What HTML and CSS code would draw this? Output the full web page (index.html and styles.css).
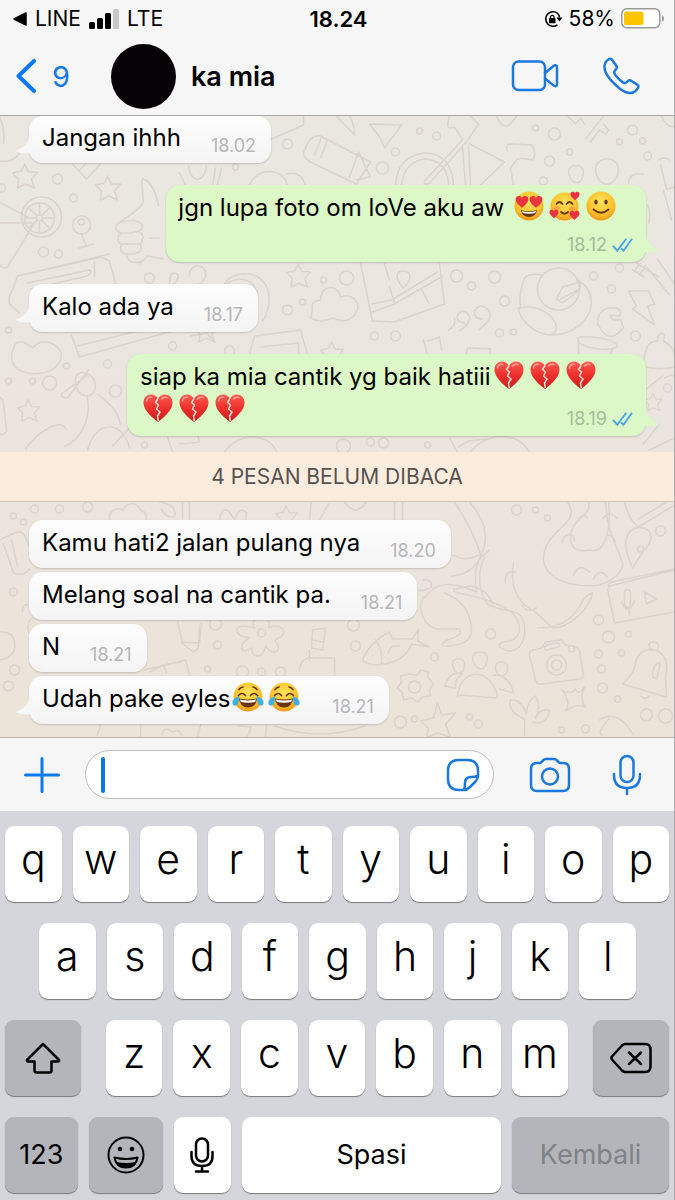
FILE: index.html
```html
<!DOCTYPE html>
<html lang="id">
<head>
<meta charset="utf-8">
<meta name="viewport" content="width=device-width, initial-scale=1">
<title>ka mia</title>
<link rel="stylesheet" href="styles.css">
</head>
<body>
<svg class="defs" aria-hidden="true">
  <defs>
    <radialGradient id="face" cx=".5" cy=".35" r=".7"><stop offset="0" stop-color="#ffe35c"/><stop offset=".6" stop-color="#fdc42e"/><stop offset="1" stop-color="#ee8f14"/></radialGradient>
    <linearGradient id="red" x1="0" y1="0" x2="0" y2="1"><stop offset="0" stop-color="#ff5a50"/><stop offset=".5" stop-color="#ee2f2c"/><stop offset="1" stop-color="#c41f1f"/></linearGradient>
    <symbol id="heart" viewBox="0 0 12 12"><path d="M6 11C2.500 8 .5 6 .5 3.600.5 .8 4.500-.2 6 2.600 7.500-.2 11.500.8 11.500 3.600 11.500 6 9.500 8 6 11z" fill="#ea3440"/></symbol>
    <symbol id="broken" viewBox="0 0 36 32">
      <path d="M18 30C9 23 3.500 17 3.500 10.500 3.500 5.500 7 2.500 11 2.500c3 0 5.500 1.500 7 4.500 1.500-3 4-4.500 7-4.500 4 0 7.500 3 7.500 8C32.500 17 27 23 18 30z" fill="url(#red)"/>
      <path d="M6.500 9c.5-2.500 2.500-4 5-3.800M21.500 7c1.500-1.600 3.500-2.200 5.500-1.500" fill="none" stroke="#ff9d92" stroke-width="1.600" stroke-linecap="round"/>
      <path d="M18 6.500l-2.500 4 3 2.500-2 4 3.500 3-2.500 4 .8 5" fill="none" stroke="#fbe3d2" stroke-width="1.500" stroke-linejoin="round"/>
    </symbol>
    <symbol id="love" viewBox="0 0 36 32">
      <circle cx="18" cy="16" r="14.500" fill="url(#face)"/>
      <use href="#heart" x="4" y="5" width="14" height="14"/><use href="#heart" x="18" y="5" width="14" height="14"/>
      <path d="M10 20q8 2.500 16 0-1 7-8 7t-8-7z" fill="#6b3410"/><path d="M11 21q7 2 14 0l-.6 2q-6.400 1.500-12.800 0z" fill="#fff"/>
    </symbol>
    <symbol id="adore" viewBox="0 0 36 32">
      <circle cx="17.500" cy="16.500" r="14" fill="url(#face)"/>
      <path d="M9.500 14q3-4 6 0M19.500 14q3-4 6 0M14 22q3.500 3.500 7 0" fill="none" stroke="#6b3a10" stroke-width="1.800" stroke-linecap="round"/>
      <ellipse cx="9.500" cy="18.500" rx="3" ry="2" fill="#fb8d47" opacity=".7"/><ellipse cx="25" cy="18.500" rx="3" ry="2" fill="#fb8d47" opacity=".7"/>
      <use href="#heart" x="23" y="1" width="10" height="10"/><use href="#heart" x="2" y="19" width="10" height="10"/><use href="#heart" x="22" y="20" width="11" height="11"/>
    </symbol>
    <symbol id="smile" viewBox="0 0 36 32">
      <circle cx="18" cy="16" r="14.500" fill="url(#face)"/>
      <ellipse cx="13" cy="12" rx="1.700" ry="2.500" fill="#65370e"/><ellipse cx="23" cy="12" rx="1.700" ry="2.500" fill="#65370e"/>
      <path d="M10.500 19.500q7.500 6.500 15 0" fill="none" stroke="#65370e" stroke-width="1.900" stroke-linecap="round"/>
    </symbol>
    <symbol id="joy" viewBox="0 0 36 32">
      <circle cx="18" cy="16" r="14.500" fill="url(#face)"/>
      <path d="M8.500 14.500q3.500-4 7 0M20.500 14.500q3.500-4 7 0M9 8.500q1.500-2 4-2.500M27 8.500q-1.500-2-4-2.500" fill="none" stroke="#6b3a10" stroke-width="1.700" stroke-linecap="round"/>
      <path d="M9 17.500q9 2 18 0-1 9-9 9t-9-9z" fill="#6b3410"/><path d="M10 18.500q8 1.800 16 0l-.8 2.500q-7.200 1.500-14.400 0z" fill="#fff"/>
      <path d="M9.500 15.500C5 16 2 19 2.500 22.500c.6 3 5 2.800 5.800-.4zM26.500 15.500c4.500.5 7.500 3.500 7 7-.6 3-5 2.800-5.800-.4z" fill="#42aee8"/>
    </symbol>
    <symbol id="tail" viewBox="0 0 18 20"><path d="M15 0C15 8 10 13 1 16c5 2.500 11 3 17 2V0z"/></symbol>
    <symbol id="ticks" viewBox="0 0 22 16"><path d="M1 9l4.500 5L15 1.500M9.500 11.500l2.500 2.500L21 1.500" fill="none" stroke="#4ba6e6" stroke-width="2"/></symbol>
    <symbol id="star" viewBox="0 0 28 28"><path d="M13 2l4 8 9 0-6 7 3 9-9-4-8 4 1-9-6-6 9-2z" /></symbol>
  </defs>
</svg>

<header class="top">
  <div class="status">
    <div class="status-side">
      <svg class="back-app" viewBox="0 0 14 14"><path d="M13 1v12L1 7z" stroke="#000" stroke-width="1.500" stroke-linejoin="round"/></svg>
      <span>LINE</span>
      <svg class="signal" viewBox="0 0 30 20"><rect y="13" width="6" height="7" rx="1.500"/><rect x="8" y="9" width="6" height="11" rx="1.500"/><rect x="16" y="4" width="6" height="16" rx="1.500"/><rect x="24" width="6" height="20" rx="1.500" fill="#c8c8c8"/></svg>
      <span>LTE</span>
    </div>
    <time class="clock">18.24</time>
    <div class="status-side status-end">
      <svg class="lock" viewBox="0 0 20 18"><path d="M14.500 3.200A7.300 7.300 0 1 0 14.500 14.800M14.500 3.200Q16.300 5 16.500 7.500" fill="none" stroke="#000" stroke-width="1.600"/><path d="M13.500 7.500h6l-3 4z"/><rect x="6" y="8" width="6.500" height="5.300" rx=".8"/><path d="M7.500 8V6.700a1.800 1.800 0 0 1 3.500 0V8" fill="none" stroke="#000" stroke-width="1.200"/></svg>
      <span>58%</span>
      <svg class="battery" viewBox="0 0 43 21"><rect x=".8" y=".8" width="38" height="19" rx="5" fill="#fff" stroke="#999" stroke-width="1.500"/><rect x="3" y="3.500" width="19.500" height="13.500" rx="2.500" fill="#fdc500"/><path d="M41 7.500q2 .5 2 3t-2 3z" fill="#999"/></svg>
    </div>
  </div>
  <nav class="nav">
    <a class="back" href="#chats" aria-label="Kembali ke daftar chat"><svg class="chevron" viewBox="0 0 20 34"><path d="M18 2L2.500 17 18 32"/></svg><span>9</span></a>
    <span class="avatar"></span>
    <h1 class="name">ka mia</h1>
    <button class="icon-btn" aria-label="Panggilan video"><svg class="video" viewBox="0 0 48 32"><rect x="2" y="1.500" width="32" height="28.500" rx="5.500"/><path d="M34 13l8.500-7c1.700-1.400 3.500-.8 3.500 1.200v17c0 2-1.800 2.600-3.500 1.200L34 18.500"/></svg></button>
    <button class="icon-btn" aria-label="Panggilan suara"><svg class="phone" viewBox="0 0 38 38"><path d="M3.500 5.500C5 3 8 1 9.500 2.200L14.500 9c1.200 1.800-.3 3.300-1.600 4.600-1.400 1.400-.8 2.800.8 5 2 2.600 4.500 5 7 6.600 1.800 1.200 3 1.200 4.200-.2 1-1.200 2.500-2.300 4.200-1.300l6.500 4.200c2 1.400 0 4.300-2.300 6.300-4.500 3.500-11.500 1.800-19.500-6C3.500 18.500.5 11 3.500 5.500z"/></svg></button>
  </nav>
</header>

<main class="chat">
  <svg class="doodles" viewBox="0 116 675 621" preserveAspectRatio="xMidYMin slice" aria-hidden="true">
    <g>
      <path d="M0 117q6 12 4 26M0 161q14 2 20-8M73 164l14 15 14-15M80 170l6-6M170 116q-2 12 20 14M270 140l34-15V116M305 150q6-16 16-14l50 26-14 22-44-21q-12-6-8-13zM315 155l7-18M321 158l7-18M350 177l9-25M359 152l12 25M357 180l13-3"/>
      <path d="M396 185q2-30 30-32 26 1 28 32M402 185q3-24 24-26 22 2 23 26M425 181l38-41-8-13q-12 5-3-16 7-7 14 0l13 13-12 18-37 41q-6 3-5-2zM463 147l3 38M469 147l2 38M470 144l35 18-24 23M508 151q-3-7 4-7l20 1q6 8 1 15-14-3-16 0l-6 8 3 17M370 124l32 1-17 23-4-10zM337 116l18 19q0-11-5-19M568 116l8 8 5-6 4 6M586 139l18-23M591 142l9-12 6 4 3-4-5-6M497 116q8 20 20 0M662 116q6 13 13 10"/>
      <path d="M569 172c0-9 15-9 15 0 0 7-4 11-7 11s-8-5-8-11zM596 170c0-15 23-15 23 0 0 8-6 14-12 14s-11-8-11-14zM629 183q1-11 15-9M659 160q6-4 11 0M661 165l6 24 8-2M664 190l8 30M648 205q4 10 1 18"/>
      <circle cx="42" cy="217" r="20"/><circle cx="40" cy="218" r="15"/><circle cx="40" cy="218" r="3"/><path d="M25 218h12M43 218h12M40 203v12M40 221v12M29 208l9 8M51 207l-9 9M29 228l9-8M51 229l-9-9M0 202l28 15M0 223h35L8 267q-5 2-8-2"/>
      <circle cx="82" cy="225" r="9"/><circle cx="82" cy="222" r="3"/><path d="M82 234l5 13M80 248l14-4M119 223c10-7 19-12 24-19 3-6-5-30 3-24 8 5 12 19 13 26M119 223c-6 6 0 10 4 10-7 2-5 11 0 11-4 4-1 10 4 10 0 9 12 11 18 5M119 223q20-6 24 3 0 8-22 7M123 244h18q5-8 0-11M127 254q18 1 14-10M150 238h10M140 264l8-8 16 3M250 185c7-18 34-18 38 0M287 174q14-4 19 11M180 173l6 12M189 166c1 15 15 20 18 0M216 168l-3 17M222 168l-4 17"/>
      <path d="M20 313l-10-9q-2-6 3-14l5-14 84-19 8 4 6 23M18 276l92-22M28 283l62-13M31 289l57-13q5-4 2-6M95 262v14M170 284q0-14 8-10 2 5-4 10M190 276c-1-14 18-13 16 0q-2 7-7 8M225 284c8-15 40-15 44 9 2 12-2 23-6 28M227 284c10-9 31-5 31 12M311 318c5-10-4-16 10-18 0-16 18-16 20-3 14-4 22 8 14 18q-9 10-22 3-12 6-22 0z"/>
      <path d="M361 263l12 58 22 1 50-18-5-40M373 312l22-8 48-28M372 304l20-4 46-28M385 264l5 16M390 287l5 16M422 289l7 14M404 288c-9-10-8-17 0-17s9 9 0 17zM455 318q2 8-6 12M460 331q13-9 9-16-5-8-11 0-2 7 7 8M479 330q16-12 10-20-8-8-14 1-1 8 8 8"/>
      <circle cx="559" cy="289" r="21"/><path d="M543 275q-17-3-19 6-5 15-3 27M519 308q19-4 32 8c8 9 8 17-1 19-18-2-31-18-31-27zM552 335c22 0 40-16 40-33q-1-15-14-22M557 299l6-12 18-5-1 8-17 13zM561 299l19-10M649 291l-20 0 8 15-4 3 22 16-7-19 7-2zM598 324q0-18 19-16 6 3 3 8l-9-1q0 7 10 4l3 9q-14 17-24-1zM637 263l22 14M633 270l12 7M658 259l17 25M648 268l22 27M641 263l-7 9M646 266l-6 9"/>
      <path d="M15 346c3-8 12-3 18 2 10-13 27-3 29 6 0 16-19 22-34 19-16-3-19-15-13-27zM72 335l8 22 118-33M78 346l80-20M250 354l5-18 46-6 7 24M261 347l38-4v10M191 336l16-3 6 6M424 340l4 15M428 341l12-4 2 13M466 357l2-9 23 1-1 5M578 339c0-5 38-1 40 7-1 5-36 5-40-7zM579 342v14M613 349l-3 7M643 368c3-23 6-27 15-27l1-6q4-4 6 0l-1 6q11 6 11 16M643 366q17 5 31 1M647 389l16-13M665 378q6-4 9-2M650 450l25-12M644 444l16-20"/>
      <path d="M88 375l-26 19q0 4 6 4l21-28M76 381c-1-14 20-10 20 6-2 14-20 11-20-6zM88 398c3 18-4 41-23 48M66 429c-2-10-24-2-40 20M98 394c17 13 21 20 23 31M88 450c7-28 34-33 42-2M113 446l17-18M0 398q4 0 4 7l3 25q0 4-7 5M168 437l5 15M180 444l20-2-2-8M225 452c11-18 43-22 52 0M472 451c14-18 46-20 57 0M450 438l8 14M459 447l10-6 18-2"/>
      <path d="M110 520c-1-11 8-12 13-10 5-8 14-9 18 0 6 2 7 7 5 12M160 502q19 3 15 15-9 1-13-8M183 502v17M190 502v17M220 520q2-15 10-8l5 8q5-15 12-7l-1 7M312 502l-2 17M320 520l9-16M345 502q12 17 23-2M395 502v18M403 502v18M455 502q17 25 26 52-15 9-27 1M470 502q27 30 8 60-9 13-26 14"/>
      <path d="M568 502c16 23-25 27-24 58 2 20 29 28 56 25 19-6 26-18 22-25-7-19-15-31-16-58M589 502c4 13-16 16-18 33-1 11 5 18 19 15 15 5 22-18 19-48M579 520q5-8 9-2M563 543c1-11 12-11 12-2M604 518q6-8 13 0M608 535q6 0 8 7M574 575q6-13 16-3M594 579q6-12 14-2"/>
      <path d="M625 502q4 18 14 25l36-22M633 568c-10-22-8-34 1-39 15-6 25 8 10 22zM639 519l28-17"/><circle cx="641" cy="549" r="3"/>
      <path d="M0 540l15-7q8-3 11 4l4 10M4 544l10 29q10 4 16-4M12 540l6 27M23 611q0-7 5-6M0 632q18-1 15 18-6 10-15 10M29 632q-2-10 4-14M178 622l5 20 17 1 2-20M182 643l12 9 5-4 1-23M145 670l41-10 4 15M150 672l14-7 3 8M168 664l14-2"/>
      <path d="M255 628c-8-12 20-15 14 0 12-6 18 4 14 7-3 4-9 4-7 7 8 8-2 16-10 4-3 14-14 12-14 2-12 8-14-4-2-10-18-2-17-17 5-10zM313 630l13-2-3 22-11-2zM312 640l12 2M310 650v10M300 671q0-10 8-13h27v17"/><circle cx="262" cy="633" r="4"/>
      <path d="M425 598c10-14 21-16 39-11l13 5q-4-24 5-35l8-7M485 557c-9 18-4 39 3 47 19 12 39-1 37 30-1 12-11 23-25 13q-2-5 10-6c14-4 12-19 2-29-21-14-38-15-56-20q-4-2 0-3l15-3q18 4 22 18M424 597c-7 13 1 32 17 32h18c6 5-3 8-11 11-8 4-5 7 2 6q23-2 22-17-2-27-27-36M514 563c-4 25 4 40 21 48l18 17M538 628c30 0 38-14 47-30q4-4 8-5c-3 15-22 35-40 35M506 583q-2-13 10-11M523 605q4 9 14 3M424 580q8-2 8 7-9 5-13 3"/>
      <path d="M610 586l65-16M610 588q-3-4 2-6l63-13M608 589l7 34 60-11M645 592l12 7-10 5zM625 592c0-3 6-3 6 0v13q-3 5-6 0zM622 602q7 15 13-1M629 608l1 7"/>
      <path d="M363 660c5-12 15-22 27-28l3 7h20q8-13 6-8l-1 10 12 6-18-3c-4 13-18 20-36 21q-10-1-13-5zM376 640q8 10 6 24M389 653q1-9 11-7M373 656v-1M410 674l8 1 3-5 8 2-1 5 6 7-4 6 1 6-8 1-5 5-6-4-8 2-1-7-5-5 4-6-1-6z"/><circle cx="415" cy="687" r="6"/>
      <path d="M473 658c0-8 15-8 15 0 0 7-4 11-7 11s-8-5-8-11zM453 664c0-7 12-7 12 0s-3 9-6 9-6-4-6-9zM496 667c0-7 12-7 12 0s-3 9-6 9-6-4-6-9zM458 696c3-28 32-30 40 0l-1 2-36-3zM445 686q6-16 18-12-8 4-7 14zM494 675q16 0 20 18l-14-4"/>
      <path d="M530 655q-1-4 4-5l8-2 4-6 16-2 4 5 9 1q4 1 5 5l4 24q1 3-4 4l-38 5q-5 1-6-4zM547 650l12-3q2-4-1-4l-11 2q-4 4 0 5z"/><circle cx="557" cy="665" r="10"/><circle cx="557" cy="665" r="5"/><circle cx="572" cy="649" r="3"/>
      <path d="M623 684q13-12 13-22 4-14 20-12 15 6 10 27l1 20-44-13zM652 651q-6-9 2-9 8 1 3 9M641 696q5 4 9 0M656 665q6-6 4 2l-3 12q-6-1-3-10zM562 690q10 5 14-1 3 7 9-2-4 10-2 12 0 5 3 8-9-3-12 0-3 1-8 4 4-8 1-12 0-5-5-9zM525 735v-16q-17-7-14-19 11-1 16 14 0-12 9-18 6 11 0 22 4-10 14-8-2 16-17 12M600 720q18-12 34 15M610 718q-13 15-8 17M438 703l4 12 14-2-10 11 5 13-13-4-11 5 2-10-8-7 13-3zM98 735q3-10 5-18M141 737v-12M163 735q1-10 10-3 7-4 9 3M198 737l4-15M240 726l12 1-4 9M266 737l1-12M275 726q45 16 90 0"/>
    </g>
    <g>
      <use href="#star" x="12" y="162" width="28" height="28"/><use href="#star" x="95" y="174" width="28" height="28"/><use href="#star" x="286" y="262" width="27" height="27"/><use href="#star" x="17" y="398" width="25" height="25"/><use href="#star" x="194" y="318" width="26" height="26"/><use href="#star" x="320" y="340" width="26" height="26"/><use href="#star" x="275" y="504" width="25" height="25"/><use href="#star" x="644" y="392" width="20" height="20"/>
      <circle cx="58" cy="179" r="5"/><circle cx="2" cy="188" r="4"/><circle cx="74" cy="198" r="4"/><circle cx="44" cy="252" r="5"/><circle cx="59" cy="254" r="4"/><circle cx="288" cy="144" r="5"/><circle cx="236" cy="167" r="3"/><circle cx="150" cy="278" r="5"/><circle cx="303" cy="302" r="3"/><circle cx="288" cy="310" r="5"/><circle cx="324" cy="280" r="3"/><circle cx="9" cy="330" r="3"/><circle cx="9" cy="381" r="3"/><circle cx="33" cy="381" r="3"/><circle cx="50" cy="383" r="7"/><circle cx="67" cy="366" r="3"/><circle cx="108" cy="364" r="4"/><circle cx="116" cy="391" r="6"/><circle cx="173" cy="346" r="4"/><circle cx="230" cy="351" r="5"/><circle cx="145" cy="445" r="3"/><circle cx="35" cy="509" r="4"/><circle cx="60" cy="509" r="4"/><circle cx="14" cy="516" r="3"/><circle cx="88" cy="507" r="5"/><circle cx="24" cy="522" r="3"/><circle cx="14" cy="592" r="4"/><circle cx="15" cy="670" r="5"/><circle cx="9" cy="686" r="5"/>
      <circle cx="420" cy="131" r="3"/><circle cx="437" cy="136" r="4"/><circle cx="396" cy="152" r="4"/><circle cx="383" cy="168" r="6"/><circle cx="536" cy="128" r="3"/><circle cx="555" cy="134" r="6"/><circle cx="570" cy="152" r="3"/><circle cx="550" cy="161" r="5"/><circle cx="544" cy="181" r="4"/><circle cx="633" cy="130" r="5"/><circle cx="620" cy="142" r="3"/><circle cx="643" cy="141" r="3"/><circle cx="648" cy="156" r="4"/><circle cx="347" cy="278" r="7"/><circle cx="457" cy="276" r="6"/><circle cx="472" cy="286" r="4"/><circle cx="495" cy="277" r="6"/><circle cx="505" cy="301" r="5"/><circle cx="594" cy="276" r="4"/><circle cx="620" cy="268" r="4"/><circle cx="612" cy="289" r="4"/><circle cx="375" cy="336" r="4"/><circle cx="396" cy="336" r="5"/><circle cx="500" cy="333" r="4"/><circle cx="514" cy="332" r="3"/><circle cx="636" cy="336" r="5"/><circle cx="668" cy="388" r="4"/><circle cx="344" cy="446" r="7"/><circle cx="371" cy="442" r="4"/><circle cx="384" cy="443" r="5"/><circle cx="428" cy="445" r="3"/><circle cx="517" cy="510" r="5"/><circle cx="536" cy="510" r="3"/><circle cx="548" cy="518" r="3"/><circle cx="661" cy="531" r="5"/>
      <circle cx="216" cy="624" r="6"/><circle cx="218" cy="645" r="4"/><circle cx="208" cy="669" r="3"/><circle cx="243" cy="672" r="6"/><circle cx="262" cy="672" r="4"/><circle cx="281" cy="672" r="5"/><circle cx="354" cy="625" r="6"/><circle cx="356" cy="646" r="5"/><circle cx="435" cy="657" r="4"/><circle cx="491" cy="634" r="5"/><circle cx="599" cy="620" r="5"/><circle cx="609" cy="637" r="6"/><circle cx="629" cy="634" r="3"/><circle cx="599" cy="654" r="4"/><circle cx="622" cy="653" r="3"/><circle cx="602" cy="669" r="4"/><circle cx="603" cy="688" r="5"/><circle cx="618" cy="699" r="3"/><circle cx="647" cy="715" r="6"/><circle cx="666" cy="716" r="7"/><circle cx="401" cy="722" r="6"/><circle cx="415" cy="719" r="3"/><circle cx="470" cy="717" r="3"/><circle cx="479" cy="724" r="4"/><circle cx="562" cy="730" r="3"/><circle cx="586" cy="729" r="4"/>
    </g>
  </svg>

  <div class="msg in"><p>Jangan ihhh</p><time>18.02</time><svg class="tail"><use href="#tail"/></svg></div>
  <div class="msg out">
    <p>jgn lupa foto om loVe aku aw <svg class="emoji" role="img" aria-label="😍"><use href="#love"/></svg><svg class="emoji" role="img" aria-label="🥰"><use href="#adore"/></svg><svg class="emoji" role="img" aria-label="🙂"><use href="#smile"/></svg></p>
    <div class="meta"><time>18.12</time><svg class="ticks"><use href="#ticks"/></svg></div><svg class="tail"><use href="#tail"/></svg>
  </div>
  <div class="msg in"><p>Kalo ada ya</p><time>18.17</time><svg class="tail"><use href="#tail"/></svg></div>
  <div class="msg out wrapped">
    <p>siap ka mia cantik yg baik hatiii<svg class="emoji" role="img" aria-label="💔"><use href="#broken"/></svg><svg class="emoji" role="img" aria-label="💔"><use href="#broken"/></svg><svg class="emoji" role="img" aria-label="💔"><use href="#broken"/></svg><svg class="emoji" role="img" aria-label="💔"><use href="#broken"/></svg><svg class="emoji" role="img" aria-label="💔"><use href="#broken"/></svg><svg class="emoji" role="img" aria-label="💔"><use href="#broken"/></svg></p>
    <div class="meta"><time>18.19</time><svg class="ticks"><use href="#ticks"/></svg></div><svg class="tail"><use href="#tail"/></svg>
  </div>
  <h2 class="unread">4 PESAN BELUM DIBACA</h2>
  <div class="group">
    <div class="msg in"><p>Kamu hati2 jalan pulang nya</p><time>18.20</time></div>
    <div class="msg in"><p>Melang soal na cantik pa.</p><time>18.21</time></div>
    <div class="msg in"><p>N</p><time>18.21</time></div>
    <div class="msg in"><p>Udah pake eyles<svg class="emoji" role="img" aria-label="😂"><use href="#joy"/></svg><svg class="emoji" role="img" aria-label="😂"><use href="#joy"/></svg></p><time>18.21</time><svg class="tail"><use href="#tail"/></svg></div>
  </div>
</main>

<form class="composer">
  <button type="button" class="icon-btn" aria-label="Lampirkan"><svg class="plus" viewBox="0 0 36 36"><path d="M18 1.500v33M1.500 18h33"/></svg></button>
  <div class="field">
    <span class="caret"></span>
    <input type="text" aria-label="Pesan">
    <button type="button" class="icon-btn" aria-label="Stiker"><svg class="sticker" viewBox="0 0 34 34"><path d="M18 32H13Q2 32 2 21V13Q2 2 13 2h8Q32 2 32 13v5q0 3-3 6l-5 5q-3 3-6 3zM18 32q1-3 1-7 0-6 6-6 4 0 7-1"/></svg></button>
  </div>
  <button type="button" class="icon-btn" aria-label="Kamera"><svg class="camera" viewBox="0 0 42 36"><path d="M8 6h2.500q1.500 0 2.500-1.500l1-1Q15 2 17 2h8q2 0 3 1.500l1 1Q30 6 31.500 6H34q6 0 6 6v16q0 6-6 6H8q-6 0-6-6V12q0-6 6-6z"/><circle cx="21" cy="19.500" r="8"/></svg></button>
  <button type="button" class="icon-btn" aria-label="Pesan suara"><svg class="mic" viewBox="0 0 30 42"><rect x="8.500" y="2" width="13" height="26" rx="6.500"/><path d="M2 20v1q0 13 13 13t13-13v-1M15 34v6"/></svg></button>
</form>

<section class="keyboard" aria-label="Keyboard">
  <div class="keys row-top"><button>q</button><button>w</button><button>e</button><button>r</button><button>t</button><button>y</button><button>u</button><button>i</button><button>o</button><button>p</button></div>
  <div class="keys row-home"><button>a</button><button>s</button><button>d</button><button>f</button><button>g</button><button>h</button><button>j</button><button>k</button><button>l</button></div>
  <div class="keys row-low">
    <button class="dark" aria-label="Shift"><svg class="shift" viewBox="0 0 36 32"><path d="M18 2L2 18q-.5 1.500 1 1.500h6.500v9q0 2 2 2h13q2 0 2-2v-9H33q1.500 0 1-1.500z"/></svg></button>
    <div class="keys letters"><button>z</button><button>x</button><button>c</button><button>v</button><button>b</button><button>n</button><button>m</button></div>
    <button class="dark" aria-label="Hapus"><svg class="erase" viewBox="0 0 42 32"><path d="M15 2h20q5.500 0 5.500 5.500v17q0 5.500-5.500 5.500H15q-1.500 0-3-1.500L2 17.500q-1-1.500 0-3L12 3.500Q13.500 2 15 2zM19 10.500l12 11.500M31 10.500L19 22"/></svg></button>
  </div>
  <div class="keys row-space">
    <button class="dark label">123</button>
    <button class="dark" aria-label="Emoji"><svg class="grin" viewBox="0 0 38 38"><circle cx="19" cy="19" r="17.500"/><path d="M7.500 21.500q11.500 3 23 0-1.500 10-11.500 10t-11.500-10z"/><path d="M9.500 26q9.500 2 19 0-3 5.500-9.500 5.500t-9.500-5.500z" class="solid"/><circle cx="13" cy="13" r="2.300" class="solid"/><circle cx="25" cy="13" r="2.300" class="solid"/></svg></button>
    <button aria-label="Dikte"><svg class="dictate" viewBox="0 0 24 36"><rect x="6" y="1.500" width="12" height="23" rx="6"/><path d="M1.500 15v4q0 10 10.500 10t10.500-10v-4M12 29v5M6 34.500h12"/></svg></button>
    <button class="label">Spasi</button>
    <button class="dark label" disabled>Kembali</button>
  </div>
</section>
</body>
</html>
```
FILE: styles.css
```css
* { box-sizing: border-box; }

body {
  margin: 0;
  min-height: 100vh;
  display: flex;
  flex-direction: column;
  border-right: 1px solid #a9a9a9;
  background: #d5d6db;
  color: #000;
  font-family: Inter, Roboto, "Liberation Sans", sans-serif;
}

svg { display: block; flex: none; }
p, h1, h2 { margin: 0; font-weight: 400; }
button { border: 0; padding: 0; background: none; color: inherit; font: inherit; }
.defs { position: absolute; width: 0; height: 0; }

.top { background: #f6f6f6; border-bottom: 1px solid #a8a8a8; }

.status {
  display: grid;
  grid-template-columns: 1fr auto 1fr;
  align-items: center;
  height: 37px;
  padding: 0 10px 0 13px;
  font-size: 21px;
}
.status-side { display: flex; align-items: center; gap: 8px; }
.status-end { justify-content: flex-end; gap: 6px; }
.clock { font-size: 22px; font-weight: 600; }
.back-app { width: 14px; height: 14px; }
.signal { width: 30px; height: 20px; }
.lock { width: 20px; height: 18px; }
.battery { width: 43px; height: 21px; }

.nav { display: flex; align-items: center; height: 78px; padding: 0 34px 0 16px; }
.back { display: flex; align-items: center; gap: 16px; width: 95px; color: #1579ea; font-size: 29px; text-decoration: none; }
.avatar { width: 65px; height: 65px; border-radius: 50%; background: #070205; }
.name { flex: 1; margin-left: 15px; font-size: 27px; font-weight: 600; }
.icon-btn { display: flex; flex: none; }
.icon-btn svg, .chevron { fill: none; stroke: #1b78de; stroke-width: 2.5; stroke-linecap: round; stroke-linejoin: round; }
.chevron { width: 20px; height: 34px; stroke: #0c79f2; stroke-width: 4; }
.video { width: 48px; height: 32px; }
.phone { width: 38px; height: 38px; margin-left: 43px; }

.chat {
  position: relative;
  display: flex;
  flex: 1;
  flex-direction: column;
  align-items: flex-start;
  gap: 22px;
  padding-bottom: 13px;
  background: linear-gradient(#eae7e1, #ece5df 50%, #ece4d9);
  overflow: hidden;
}
.doodles { position: absolute; inset: 0; width: 100%; height: 100%; fill: none; stroke: #dad4cc; stroke-width: 1.5; stroke-linejoin: round; stroke-linecap: round; }

.msg { position: relative; border-radius: 14px; box-shadow: 0 1px 2px #0000002e; }
.msg p { font-size: 24px; line-height: 33px; }
.msg time { color: #b5b5b8; font-size: 18px; line-height: 20px; }
.in { display: flex; align-items: flex-end; gap: 30px; height: 48px; margin-left: 29px; padding: 0 15px 7px 13px; background: linear-gradient(#fdfdfd, #f4f4f4); }
.in p { margin-bottom: 2px; }
.out { align-self: flex-end; max-width: 77%; margin-right: 28px; padding: 6px 27px 38px 12px; background: #dbf8c6; }
.chat > .in:first-of-type { height: 47px; }
.out.wrapped { padding: 6px 14px 10px 13px; }
.meta { position: absolute; right: 13px; bottom: 7px; display: flex; align-items: center; gap: 5px; }
.out .meta time { color: #a5bd98; }
.ticks { width: 21px; height: 16px; }
.emoji { display: inline-block; width: 36px; height: 32px; margin: -3px 0; vertical-align: -3px; }
.tail { position: absolute; bottom: 8px; width: 18px; height: 20px; }
.in .tail { left: -15px; fill: #f7f7f7; }
.out .tail { right: -15px; fill: #dbf8c6; transform: scaleX(-1); }

.unread {
  position: relative;
  align-self: stretch;
  margin: -6px 0 -4px;
  border-bottom: 1px solid #d3c3b4;
  background: #fbecdd;
  color: #58524e;
  font-size: 21px;
  line-height: 49px;
  text-align: center;
}
.group { display: flex; flex-direction: column; align-items: flex-start; gap: 4px; }

.composer { display: flex; align-items: center; height: 74px; padding: 0 32px 0 24px; border-top: 1px solid #b4b4b4; background: #f6f6f6; }
.plus { width: 36px; height: 36px; }
.icon-btn .plus { stroke: #0c79f2; stroke-width: 3; }
.field { display: flex; flex: 1; align-items: center; min-width: 0; height: 49px; margin-left: 25px; padding: 0 13px 0 15px; border: 1px solid #bcbcbc; border-radius: 25px; background: #fff; }
.field input { flex: 1; min-width: 0; border: 0; outline: 0; background: none; font: inherit; font-size: 24px; }
.caret { width: 4px; height: 36px; border-radius: 2px; background: #0f73ea; }
.sticker { width: 34px; height: 34px; }
.camera { width: 42px; height: 36px; margin-left: 35px; }
.mic { width: 30px; height: 42px; margin-left: 41px; }

.keyboard { display: flex; flex-direction: column; gap: 21px; padding: 15px 5px 7px; }
.keys { display: grid; grid-auto-flow: column; grid-auto-columns: 1fr; gap: 11px; }
.row-home { padding: 0 33px 0 34px; }
.row-low { grid-auto-columns: auto; grid-template-columns: 76fr 463fr 76fr; gap: 25px; }
.row-space { grid-auto-columns: auto; grid-template-columns: 73fr 74fr 57fr 260fr 157fr; }
.keys button {
  display: flex;
  align-items: center;
  justify-content: center;
  min-width: 0;
  height: 76px;
  padding-bottom: 10px;
  border-radius: 9px;
  background: #fff;
  box-shadow: 0 1px 1px #77787c;
  font-size: 41px;
  font-weight: 350;
}
.keys .dark { background: #b3b5bb; }
.keys .dark, .row-space button { padding-bottom: 0; }
.keys .label { padding-bottom: 2px; font-size: 27px; font-weight: 400; }
.keys button:disabled { color: #808287; }
.keys svg { fill: none; stroke: #000; stroke-width: 2.5; stroke-linecap: round; stroke-linejoin: round; }
.shift { width: 36px; height: 32px; }
.erase { width: 42px; height: 32px; }
.grin { width: 38px; height: 38px; }
.keys .grin { stroke-width: 2; }
.grin .solid { fill: #000; stroke: none; }
.dictate { width: 24px; height: 36px; }
```
